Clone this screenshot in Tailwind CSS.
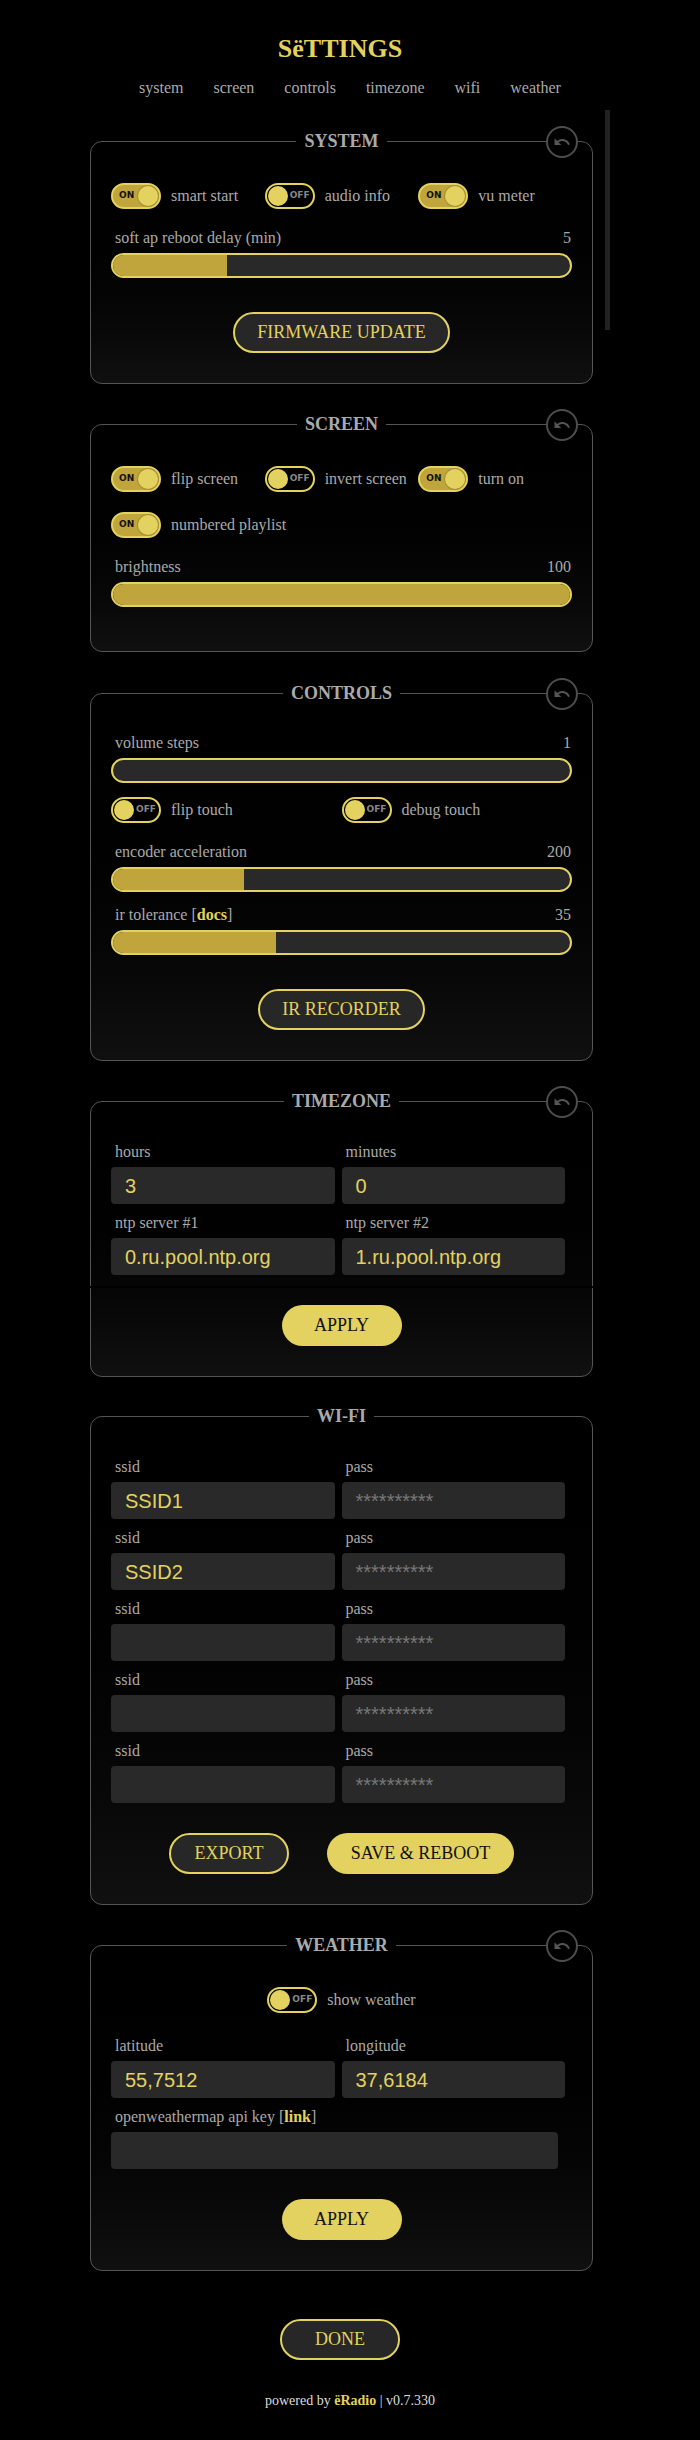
<!DOCTYPE html>
<html lang="en">
<head>
    <meta charset="UTF-8">
    <meta name="viewport" content="width=device-width, initial-scale=1.0">
    <title>ëRadio - Settings</title>
    <script src="https://cdn.jsdelivr.net/npm/@tailwindcss/browser@4"></script>
</head>
<body class="bg-black text-[#aaa] font-['Liberation_Serif',serif] text-[16px]">
<div class="relative w-[700px] h-[2440px] overflow-hidden">

    <!-- scroll thumb -->
    <div class="absolute left-[605px] top-[110px] w-[5px] h-[220px] bg-[#222]"></div>

    <h1 class="w-[680px] pt-[34px] text-center text-[26px] leading-[30px] font-bold text-[#e3d25f]">SëTTINGS</h1>
    <nav class="flex justify-center gap-[30px] mt-[14px] h-5 leading-5 text-[#aaa]">
        <a>system</a><a>screen</a><a>controls</a><a>timezone</a><a>wifi</a><a>weather</a>
    </nav>

    <!-- System -->
    <div class="relative w-[503px] ml-[90px] mt-[33px]">
        <fieldset class="border border-[#555] rounded-xl px-[20px] pt-[32px] pb-[30px] bg-linear-to-b from-black to-[#101010]">
            <legend class="mx-auto px-2 h-5 leading-5 text-[18px] font-bold text-[#aaa]">SYSTEM</legend>
            <div class="grid grid-cols-3">
                <div class="flex items-center gap-2.5">
                    <div class="bg-black"><div class="flex items-center justify-between w-[50px] h-[26px] rounded-full border-2 border-[#e3d25f] bg-[#bfa53c] pl-[6px] pr-px"><span class="font-['DejaVu_Sans',sans-serif] font-bold text-[9px] text-[#111]">ON</span><span class="size-5 rounded-full bg-[#e3d25f] ring-1 ring-[#a8902f]"></span></div></div>
                    <span>smart start</span>
                </div>
                <div class="flex items-center gap-2.5">
                    <div class="bg-black"><div class="flex items-center justify-between w-[50px] h-[26px] rounded-full border-2 border-[#e3d25f] bg-black pl-px pr-[3px]"><span class="size-5 rounded-full bg-[#e3d25f]"></span><span class="font-['DejaVu_Sans',sans-serif] font-bold text-[9px] text-[#888]">OFF</span></div></div>
                    <span>audio info</span>
                </div>
                <div class="flex items-center gap-2.5">
                    <div class="bg-black"><div class="flex items-center justify-between w-[50px] h-[26px] rounded-full border-2 border-[#e3d25f] bg-[#bfa53c] pl-[6px] pr-px"><span class="font-['DejaVu_Sans',sans-serif] font-bold text-[9px] text-[#111]">ON</span><span class="size-5 rounded-full bg-[#e3d25f] ring-1 ring-[#a8902f]"></span></div></div>
                    <span>vu meter</span>
                </div>
            </div>
            <div class="flex justify-between h-5 leading-5 pl-1 pr-px mt-[19px] mb-[5px]"><span>soft ap reboot delay (min)</span><span>5</span></div>
            <div class="h-[25px] rounded-full border-2 border-[#e3d25f] bg-[#292929] overflow-hidden"><div class="h-full w-[114px] bg-[#bfa53c]"></div></div>
            <div class="flex justify-center mt-[34px]">
                <button class="w-[217px] h-[41px] rounded-full border-2 border-[#e3d25f] bg-[#272727] text-[18px] text-[#e3d25f]">FIRMWARE UPDATE</button>
            </div>
        </fieldset>
        <button class="absolute top-[-5px] left-[456px] flex items-center justify-center size-8 rounded-full border-2 border-[#4d4d4d] bg-black">
            <svg class="size-[18px] fill-[#555]" viewBox="0 0 24 24"><path d="M12.5 8c-2.65 0-5.05.99-6.9 2.6L2 7v9h9l-3.62-3.62c1.39-1.16 3.16-1.88 5.12-1.88 3.54 0 6.55 2.31 7.6 5.5l2.37-.78C21.08 11.03 17.15 8 12.5 8z"/></svg>
        </button>
    </div>

    <!-- Screen -->
    <div class="relative w-[503px] ml-[90px] mt-[30px]">
        <fieldset class="border border-[#555] rounded-xl px-[20px] pt-[32px] pb-[44px] bg-linear-to-b from-black to-[#101010]">
            <legend class="mx-auto px-2 h-5 leading-5 text-[18px] font-bold text-[#aaa]">SCREEN</legend>
            <div class="grid grid-cols-3 gap-y-5">
                <div class="flex items-center gap-2.5">
                    <div class="bg-black"><div class="flex items-center justify-between w-[50px] h-[26px] rounded-full border-2 border-[#e3d25f] bg-[#bfa53c] pl-[6px] pr-px"><span class="font-['DejaVu_Sans',sans-serif] font-bold text-[9px] text-[#111]">ON</span><span class="size-5 rounded-full bg-[#e3d25f] ring-1 ring-[#a8902f]"></span></div></div>
                    <span>flip screen</span>
                </div>
                <div class="flex items-center gap-2.5">
                    <div class="bg-black"><div class="flex items-center justify-between w-[50px] h-[26px] rounded-full border-2 border-[#e3d25f] bg-black pl-px pr-[3px]"><span class="size-5 rounded-full bg-[#e3d25f]"></span><span class="font-['DejaVu_Sans',sans-serif] font-bold text-[9px] text-[#888]">OFF</span></div></div>
                    <span>invert screen</span>
                </div>
                <div class="flex items-center gap-2.5">
                    <div class="bg-black"><div class="flex items-center justify-between w-[50px] h-[26px] rounded-full border-2 border-[#e3d25f] bg-[#bfa53c] pl-[6px] pr-px"><span class="font-['DejaVu_Sans',sans-serif] font-bold text-[9px] text-[#111]">ON</span><span class="size-5 rounded-full bg-[#e3d25f] ring-1 ring-[#a8902f]"></span></div></div>
                    <span>turn on</span>
                </div>
                <div class="flex items-center gap-2.5 col-span-3">
                    <div class="bg-black"><div class="flex items-center justify-between w-[50px] h-[26px] rounded-full border-2 border-[#e3d25f] bg-[#bfa53c] pl-[6px] pr-px"><span class="font-['DejaVu_Sans',sans-serif] font-bold text-[9px] text-[#111]">ON</span><span class="size-5 rounded-full bg-[#e3d25f] ring-1 ring-[#a8902f]"></span></div></div>
                    <span>numbered playlist</span>
                </div>
            </div>
            <div class="flex justify-between h-5 leading-5 pl-1 pr-px mt-[19px] mb-[5px]"><span>brightness</span><span>100</span></div>
            <div class="h-[25px] rounded-full border-2 border-[#e3d25f] bg-[#292929] overflow-hidden"><div class="h-full w-full bg-[#bfa53c]"></div></div>
        </fieldset>
        <button class="absolute top-[-5px] left-[456px] flex items-center justify-center size-8 rounded-full border-2 border-[#4d4d4d] bg-black">
            <svg class="size-[18px] fill-[#555]" viewBox="0 0 24 24"><path d="M12.5 8c-2.65 0-5.05.99-6.9 2.6L2 7v9h9l-3.62-3.62c1.39-1.16 3.16-1.88 5.12-1.88 3.54 0 6.55 2.31 7.6 5.5l2.37-.78C21.08 11.03 17.15 8 12.5 8z"/></svg>
        </button>
    </div>

    <!-- Controls -->
    <div class="relative w-[503px] ml-[90px] mt-[31px]">
        <fieldset class="border border-[#555] rounded-xl px-[20px] pt-[30px] pb-[30px] bg-linear-to-b from-black to-[#101010]">
            <legend class="mx-auto px-2 h-5 leading-5 text-[18px] font-bold text-[#aaa]">CONTROLS</legend>
            <div class="flex justify-between h-5 leading-5 pl-1 pr-px mb-[5px]"><span>volume steps</span><span>1</span></div>
            <div class="h-[25px] rounded-full border-2 border-[#e3d25f] bg-[#292929] overflow-hidden"></div>
            <div class="grid grid-cols-2 mt-[14px]">
                <div class="flex items-center gap-2.5">
                    <div class="bg-black"><div class="flex items-center justify-between w-[50px] h-[26px] rounded-full border-2 border-[#e3d25f] bg-black pl-px pr-[3px]"><span class="size-5 rounded-full bg-[#e3d25f]"></span><span class="font-['DejaVu_Sans',sans-serif] font-bold text-[9px] text-[#888]">OFF</span></div></div>
                    <span>flip touch</span>
                </div>
                <div class="flex items-center gap-2.5">
                    <div class="bg-black"><div class="flex items-center justify-between w-[50px] h-[26px] rounded-full border-2 border-[#e3d25f] bg-black pl-px pr-[3px]"><span class="size-5 rounded-full bg-[#e3d25f]"></span><span class="font-['DejaVu_Sans',sans-serif] font-bold text-[9px] text-[#888]">OFF</span></div></div>
                    <span>debug touch</span>
                </div>
            </div>
            <div class="flex justify-between h-5 leading-5 pl-1 pr-px mt-[19px] mb-[5px]"><span>encoder acceleration</span><span>200</span></div>
            <div class="h-[25px] rounded-full border-2 border-[#e3d25f] bg-[#292929] overflow-hidden"><div class="h-full w-[131px] bg-[#bfa53c]"></div></div>
            <div class="flex justify-between h-5 leading-5 pl-1 pr-px mt-[13px] mb-[5px]"><span>ir tolerance [<a class="font-bold text-[#e3d25f]">docs</a>]</span><span>35</span></div>
            <div class="h-[25px] rounded-full border-2 border-[#e3d25f] bg-[#292929] overflow-hidden"><div class="h-full w-[163px] bg-[#bfa53c]"></div></div>
            <div class="flex justify-center mt-[34px]">
                <button class="w-[167px] h-[41px] rounded-full border-2 border-[#e3d25f] bg-[#272727] text-[18px] text-[#e3d25f]">IR RECORDER</button>
            </div>
        </fieldset>
        <button class="absolute top-[-5px] left-[456px] flex items-center justify-center size-8 rounded-full border-2 border-[#4d4d4d] bg-black">
            <svg class="size-[18px] fill-[#555]" viewBox="0 0 24 24"><path d="M12.5 8c-2.65 0-5.05.99-6.9 2.6L2 7v9h9l-3.62-3.62c1.39-1.16 3.16-1.88 5.12-1.88 3.54 0 6.55 2.31 7.6 5.5l2.37-.78C21.08 11.03 17.15 8 12.5 8z"/></svg>
        </button>
    </div>

    <!-- Timezone -->
    <div class="relative w-[503px] ml-[90px] mt-[30px]">
        <fieldset class="border border-[#555] rounded-xl px-[20px] pt-[31px] pb-[30px] bg-linear-to-b from-black to-[#101010]">
            <legend class="mx-auto px-2 h-5 leading-5 text-[18px] font-bold text-[#aaa]">TIMEZONE</legend>
            <div class="grid grid-cols-2 w-[454px] gap-x-[7px] gap-y-[9px]">
                <div>
                    <div class="h-5 leading-5 pl-1 mb-[5px]">hours</div>
                    <div class="flex items-center h-[37px] pl-[14px] rounded bg-[#292929] font-['Liberation_Sans',sans-serif] text-[20px] text-[#e3d25f]">3</div>
                </div>
                <div>
                    <div class="h-5 leading-5 pl-1 mb-[5px]">minutes</div>
                    <div class="flex items-center h-[37px] pl-[14px] rounded bg-[#292929] font-['Liberation_Sans',sans-serif] text-[20px] text-[#e3d25f]">0</div>
                </div>
                <div>
                    <div class="h-5 leading-5 pl-1 mb-[5px]">ntp server #1</div>
                    <div class="flex items-center h-[37px] pl-[14px] rounded bg-[#292929] font-['Liberation_Sans',sans-serif] text-[20px] text-[#e3d25f]">0.ru.pool.ntp.org</div>
                </div>
                <div>
                    <div class="h-5 leading-5 pl-1 mb-[5px]">ntp server #2</div>
                    <div class="flex items-center h-[37px] pl-[14px] rounded bg-[#292929] font-['Liberation_Sans',sans-serif] text-[20px] text-[#e3d25f]">1.ru.pool.ntp.org</div>
                </div>
            </div>
            <div class="h-[2px] -mx-[21px] mt-[11px] bg-black"></div>
            <div class="flex justify-center mt-[17px]">
                <button class="w-[120px] h-[41px] rounded-full bg-[#e3d25f] text-[18px] text-[#111]">APPLY</button>
            </div>
        </fieldset>
        <button class="absolute top-[-5px] left-[456px] flex items-center justify-center size-8 rounded-full border-2 border-[#4d4d4d] bg-black">
            <svg class="size-[18px] fill-[#555]" viewBox="0 0 24 24"><path d="M12.5 8c-2.65 0-5.05.99-6.9 2.6L2 7v9h9l-3.62-3.62c1.39-1.16 3.16-1.88 5.12-1.88 3.54 0 6.55 2.31 7.6 5.5l2.37-.78C21.08 11.03 17.15 8 12.5 8z"/></svg>
        </button>
    </div>

    <!-- Wi-Fi -->
    <div class="relative w-[503px] ml-[90px] mt-[29px]">
        <fieldset class="border border-[#555] rounded-xl px-[20px] pt-[31px] pb-[30px] bg-linear-to-b from-black to-[#101010]">
            <legend class="mx-auto px-2 h-5 leading-5 text-[18px] font-bold text-[#aaa]">WI-FI</legend>
            <div class="grid grid-cols-2 w-[454px] gap-x-[7px] gap-y-[9px]">
                <div>
                    <div class="h-5 leading-5 pl-1 mb-[5px]">ssid</div>
                    <div class="flex items-center h-[37px] pl-[14px] rounded bg-[#292929] font-['Liberation_Sans',sans-serif] text-[20px] text-[#e3d25f]">SSID1</div>
                </div>
                <div>
                    <div class="h-5 leading-5 pl-1 mb-[5px]">pass</div>
                    <div class="flex items-center h-[37px] pl-[14px] rounded bg-[#292929] font-['Liberation_Sans',sans-serif] text-[20px] text-[#777]">**********</div>
                </div>
                <div>
                    <div class="h-5 leading-5 pl-1 mb-[5px]">ssid</div>
                    <div class="flex items-center h-[37px] pl-[14px] rounded bg-[#292929] font-['Liberation_Sans',sans-serif] text-[20px] text-[#e3d25f]">SSID2</div>
                </div>
                <div>
                    <div class="h-5 leading-5 pl-1 mb-[5px]">pass</div>
                    <div class="flex items-center h-[37px] pl-[14px] rounded bg-[#292929] font-['Liberation_Sans',sans-serif] text-[20px] text-[#777]">**********</div>
                </div>
                <div>
                    <div class="h-5 leading-5 pl-1 mb-[5px]">ssid</div>
                    <div class="flex items-center h-[37px] pl-[14px] rounded bg-[#292929] font-['Liberation_Sans',sans-serif] text-[20px] text-[#e3d25f]"></div>
                </div>
                <div>
                    <div class="h-5 leading-5 pl-1 mb-[5px]">pass</div>
                    <div class="flex items-center h-[37px] pl-[14px] rounded bg-[#292929] font-['Liberation_Sans',sans-serif] text-[20px] text-[#777]">**********</div>
                </div>
                <div>
                    <div class="h-5 leading-5 pl-1 mb-[5px]">ssid</div>
                    <div class="flex items-center h-[37px] pl-[14px] rounded bg-[#292929] font-['Liberation_Sans',sans-serif] text-[20px] text-[#e3d25f]"></div>
                </div>
                <div>
                    <div class="h-5 leading-5 pl-1 mb-[5px]">pass</div>
                    <div class="flex items-center h-[37px] pl-[14px] rounded bg-[#292929] font-['Liberation_Sans',sans-serif] text-[20px] text-[#777]">**********</div>
                </div>
                <div>
                    <div class="h-5 leading-5 pl-1 mb-[5px]">ssid</div>
                    <div class="flex items-center h-[37px] pl-[14px] rounded bg-[#292929] font-['Liberation_Sans',sans-serif] text-[20px] text-[#e3d25f]"></div>
                </div>
                <div>
                    <div class="h-5 leading-5 pl-1 mb-[5px]">pass</div>
                    <div class="flex items-center h-[37px] pl-[14px] rounded bg-[#292929] font-['Liberation_Sans',sans-serif] text-[20px] text-[#777]">**********</div>
                </div>
            </div>
            <div class="flex justify-center gap-[38px] mt-[30px]">
                <button class="w-[120px] h-[41px] rounded-full border-2 border-[#e3d25f] bg-[#272727] text-[18px] text-[#e3d25f]">EXPORT</button>
                <button class="w-[187px] h-[41px] rounded-full bg-[#e3d25f] text-[18px] text-[#111]">SAVE &amp; REBOOT</button>
            </div>
        </fieldset>
    </div>

    <!-- Weather -->
    <div class="relative w-[503px] ml-[90px] mt-[30px]">
        <fieldset class="border border-[#555] rounded-xl px-[20px] pt-[32px] pb-[30px] bg-linear-to-b from-black to-[#101010]">
            <legend class="mx-auto px-2 h-5 leading-5 text-[18px] font-bold text-[#aaa]">WEATHER</legend>
            <div class="flex items-center justify-center gap-2.5 mb-[23px]">
                <div class="bg-black"><div class="flex items-center justify-between w-[50px] h-[26px] rounded-full border-2 border-[#e3d25f] bg-black pl-px pr-[3px]"><span class="size-5 rounded-full bg-[#e3d25f]"></span><span class="font-['DejaVu_Sans',sans-serif] font-bold text-[9px] text-[#888]">OFF</span></div></div>
                <span>show weather</span>
            </div>
            <div class="grid grid-cols-2 w-[454px] gap-x-[7px] gap-y-[9px]">
                <div>
                    <div class="h-5 leading-5 pl-1 mb-[5px]">latitude</div>
                    <div class="flex items-center h-[37px] pl-[14px] rounded bg-[#292929] font-['Liberation_Sans',sans-serif] text-[20px] text-[#e3d25f]">55,7512</div>
                </div>
                <div>
                    <div class="h-5 leading-5 pl-1 mb-[5px]">longitude</div>
                    <div class="flex items-center h-[37px] pl-[14px] rounded bg-[#292929] font-['Liberation_Sans',sans-serif] text-[20px] text-[#e3d25f]">37,6184</div>
                </div>
            </div>
            <div class="h-5 leading-5 pl-1 mt-[9px] mb-[5px]">openweathermap api key [<a class="font-bold text-[#e3d25f]">link</a>]</div>
            <div class="w-[447px] h-[37px] rounded bg-[#292929]"></div>
            <div class="flex justify-center mt-[30px]">
                <button class="w-[120px] h-[41px] rounded-full bg-[#e3d25f] text-[18px] text-[#111]">APPLY</button>
            </div>
        </fieldset>
        <button class="absolute top-[-5px] left-[456px] flex items-center justify-center size-8 rounded-full border-2 border-[#4d4d4d] bg-black">
            <svg class="size-[18px] fill-[#555]" viewBox="0 0 24 24"><path d="M12.5 8c-2.65 0-5.05.99-6.9 2.6L2 7v9h9l-3.62-3.62c1.39-1.16 3.16-1.88 5.12-1.88 3.54 0 6.55 2.31 7.6 5.5l2.37-.78C21.08 11.03 17.15 8 12.5 8z"/></svg>
        </button>
    </div>

    <div class="flex justify-center w-[680px] mt-[48px]">
        <button class="w-[120px] h-[41px] rounded-full border-2 border-[#e3d25f] bg-[#272727] text-[18px] text-[#e3d25f]">DONE</button>
    </div>

    <p class="mt-[31px] text-center text-[14px] leading-5 text-[#ddd]">powered by <span class="font-bold text-[#e3d25f]">ëRadio</span> | v0.7.330</p>
</div>
</body>
</html>
